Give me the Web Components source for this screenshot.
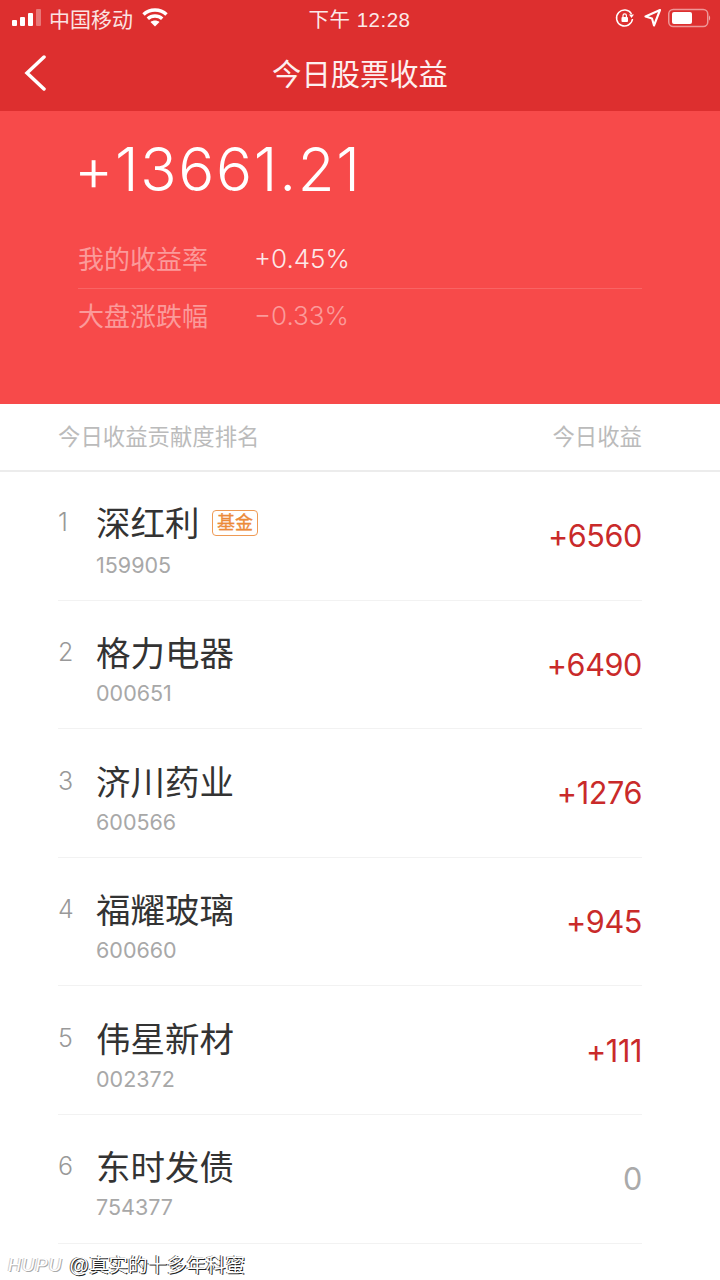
<!DOCTYPE html>
<html lang="zh">
<head>
<meta charset="utf-8">
<title>今日股票收益</title>
<style>
html,body{margin:0;padding:0;background:#fff;}
body{width:720px;height:1280px;overflow:hidden;position:relative;font-family:"Liberation Sans","Noto Sans CJK SC",sans-serif;}
</style>
</head>
<body>
<app-header></app-header>
<profit-summary amount="+13661.21"></profit-summary>
<rank-head></rank-head>
<rank-row rank="1" name="深红利" code="159905" value="+6560" tag="基金"></rank-row>
<rank-row rank="2" name="格力电器" code="000651" value="+6490"></rank-row>
<rank-row rank="3" name="济川药业" code="600566" value="+1276"></rank-row>
<rank-row rank="4" name="福耀玻璃" code="600660" value="+945"></rank-row>
<rank-row rank="5" name="伟星新材" code="002372" value="+111"></rank-row>
<rank-row rank="6" name="东时发债" code="754377" value="0" flat></rank-row>
<water-mark></water-mark>
<script>
class AppHeader extends HTMLElement{
    constructor(){
        super();
        this.$ = this.attachShadow({mode: 'open'});
        this.$.innerHTML = `
            <style>
                :host{display:block;height:111px;background:#dd2f2f;color:#fff;}
                .status{height:36px;display:grid;grid-template-columns:1fr auto 1fr;align-items:center;padding:0 9px 0 12px;}
                .left,.right{display:flex;align-items:center;}
                .right{justify-content:flex-end;}
                .carrier{font-size:21px;margin:0 9px 0 7px;color:#fbe3e3;}
                .wifi{margin-top:-3px;}
                .time{font-size:20.5px;letter-spacing:.5px;color:#fbe9e9;margin-left:-4px;}
                .bar{height:74px;display:grid;grid-template-columns:1fr auto 1fr;align-items:center;padding:0 24px;}
                .title{font-size:29.3px;line-height:68px;padding-top:3px;color:#fdf0f0;}
                svg{display:block;}
            </style>
            <div class="status">
                <div class="left">
                    <svg width="30" height="18" viewBox="0 0 30 18">
                        <rect x="0" y="11" width="5" height="6" rx="1" fill="#fff"/>
                        <rect x="8" y="8" width="5" height="9" rx="1" fill="#fff"/>
                        <rect x="16" y="4" width="5" height="13" rx="1" fill="#fff"/>
                        <rect x="24" y="0" width="5" height="17" rx="1" fill="#fff" opacity=".35"/>
                    </svg>
                    <span class="carrier">中国移动</span>
                    <svg class="wifi" width="26" height="20" viewBox="0 0 26 20" fill="none" stroke="#fff" stroke-width="3.500">
                        <path d="M1.5 7.5C7.8 1.6 18.2 1.6 24.5 7.5"/>
                        <path d="M5.8 11.8C9.8 8.200 16.200 8.200 20.200 11.800"/>
                        <path d="M13 19.500l-4.500-4.500c2.500-2 6.500-2 9 0z" fill="#fff" stroke="none"/>
                    </svg>
                </div>
                <span class="time">下午 12:28</span>
                <div class="right">
                    <svg width="20" height="20" viewBox="0 0 20 20" fill="none" stroke="#fff" stroke-width="1.500" style="margin-right:9px">
                        <path d="M16.500 6A8 8 0 1 0 17.500 11"/>
                        <path d="M14 6.500h5l-2.500 3.500z" fill="#fff" stroke="none"/>
                        <rect x="6.500" y="9" width="6.500" height="5" rx="1" fill="#fff" stroke="none"/>
                        <path d="M8 9V7.500a1.700 1.700 0 0 1 3.400 0V9" stroke-width="1.200"/>
                    </svg>
                    <svg width="17" height="18" viewBox="0 0 17 18" fill="none" stroke="#fff" stroke-width="2.100" stroke-linejoin="round" style="margin-right:6px">
                        <path d="M16 1L1.500 7.500l6.500 2 2 7z"/>
                    </svg>
                    <svg width="44" height="20" viewBox="0 0 44 20">
                        <rect x="1.750" y="1.500" width="39" height="17" rx="4.500" fill="none" stroke="#fff" stroke-opacity=".5" stroke-width="1.500"/>
                        <rect x="5" y="4" width="20" height="12" rx="2" fill="#fff"/>
                        <path d="M42 7.500c1.500.5 1.500 4.500 0 5z" fill="#fff" fill-opacity=".55"/>
                    </svg>
                </div>
            </div>
            <div class="bar">
                <svg width="24" height="36" viewBox="0 0 24 36" fill="none" stroke="#fff" stroke-width="3.500" stroke-linecap="round"><path d="M20 2L3 18l17 16"/></svg>
                <div class="title">今日股票收益</div>
                <span></span>
            </div>
        `
    }
}

class ProfitSummary extends HTMLElement{
    constructor(){
        super();
        this.$ = this.attachShadow({mode: 'open'});
        this.$.innerHTML = `
            <style>
                :host{display:block;height:293px;background:#f74a4a;padding:0 78px;color:#fff;box-sizing:border-box;}
                .amount{font-family:Inter,sans-serif;font-weight:300;font-size:60px;letter-spacing:1.7px;margin-left:-4px;line-height:60px;padding-top:28px;height:88px;}
                .rows{width:564px;padding-top:4px;}
                .line{display:flex;align-items:center;height:57px;font-size:26px;color:#fb9a9a;}
                .line + .line{height:55px;border-top:1px solid #f96464;}
                .label{width:176px;margin-top:-4px;}
                .val{font-family:Inter,sans-serif;font-weight:300;font-size:26px;margin-top:-2px;}
                .up{color:#fde8e8;}
            </style>
            <div class="amount"></div>
            <div class="rows">
                <div class="line"><span class="label">我的收益率</span><span class="val up">+0.45%</span></div>
                <div class="line"><span class="label">大盘涨跌幅</span><span class="val">−0.33%</span></div>
            </div>
        `
        this.$.querySelector('.amount').textContent = this.getAttribute('amount')
    }
}

class RankHead extends HTMLElement{
    constructor(){
        super();
        this.$ = this.attachShadow({mode: 'open'});
        this.$.innerHTML = `
            <style>
                :host{display:flex;justify-content:space-between;align-items:center;height:62px;padding:0 78px 4px 58px;border-bottom:2px solid #ececec;font-size:22.4px;color:#bbb;background:#fff;}
            </style>
            <span>今日收益贡献度排名</span><span>今日收益</span>
        `
    }
}

class RankRow extends HTMLElement{
    constructor(){
        super();
        this.$ = this.attachShadow({mode: 'open'});
        this.$.innerHTML = `
            <style>
                :host{display:block;padding:0 78px 0 58px;}
                .row{height:128.6px;box-sizing:border-box;border-bottom:1px solid #f2f2f2;display:flex;align-items:center;}
                .rank{width:38px;font-family:Inter,sans-serif;font-weight:300;font-size:25px;color:#999;align-self:flex-start;padding-top:35.4px;line-height:32px;}
                .main{flex:1;align-self:flex-start;padding-top:30.4px;}
                .name{font-size:34.5px;line-height:46px;color:#333;display:flex;align-items:center;}
                .tag{margin-left:12.5px;margin-top:-2px;font-size:18px;line-height:24px;height:24px;padding:0 4px;border:1px solid #ee9a55;border-radius:4px;color:#ec8a3a;-webkit-text-stroke:.3px #ec8a3a;}
                .code{font-family:Inter,sans-serif;font-size:21.5px;line-height:26px;color:#a8a8a8;margin-top:3px;}
                .value{font-family:Inter,sans-serif;font-size:30.6px;letter-spacing:-.4px;color:#c92a2a;}
                :host([flat]) .value{color:#aaa;}
                /* the tagged row sits its name and rank a touch higher */
                :host([tag]) .rank{padding-top:34px;}
                :host([tag]) .name{margin-top:-1px;margin-bottom:5px;}
            </style>
            <div class="row">
                <div class="rank"></div>
                <div class="main">
                    <div class="name"><span class="n"></span></div>
                    <div class="code"></div>
                </div>
                <div class="value"></div>
            </div>
        `
    }

    connectedCallback(){
        this.$.querySelector('.rank').textContent = this.getAttribute('rank')
        this.$.querySelector('.n').textContent = this.getAttribute('name')
        this.$.querySelector('.code').textContent = this.getAttribute('code')
        this.$.querySelector('.value').textContent = this.getAttribute('value')
        const tag = this.getAttribute('tag')
        if(tag){
            const el = document.createElement('span')
            el.className = 'tag'
            el.textContent = tag
            this.$.querySelector('.name').appendChild(el)
        }
    }
}

// forum credit stamped over the bottom left corner
class WaterMark extends HTMLElement{
    constructor(){
        super();
        this.$ = this.attachShadow({mode: 'open'});
        this.$.innerHTML = `
            <style>
                :host{position:absolute;left:8px;top:1252px;display:flex;align-items:center;gap:7px;font-size:19.500px;line-height:26px;color:#fff;text-shadow:1px 1px 0 #222,-1px 0 0 #555;}
                i{font-size:18px;letter-spacing:.8px;color:#fff;text-shadow:1px 1px 0 #aaa,-1px 0 0 #ccc;}
            </style>
            <i>HUPU</i><span>@真实的十多年科蜜</span>
        `
    }
}

customElements.define('app-header', AppHeader)
customElements.define('profit-summary', ProfitSummary)
customElements.define('rank-head', RankHead)
customElements.define('rank-row', RankRow)
customElements.define('water-mark', WaterMark)
</script>
</body>
</html>
